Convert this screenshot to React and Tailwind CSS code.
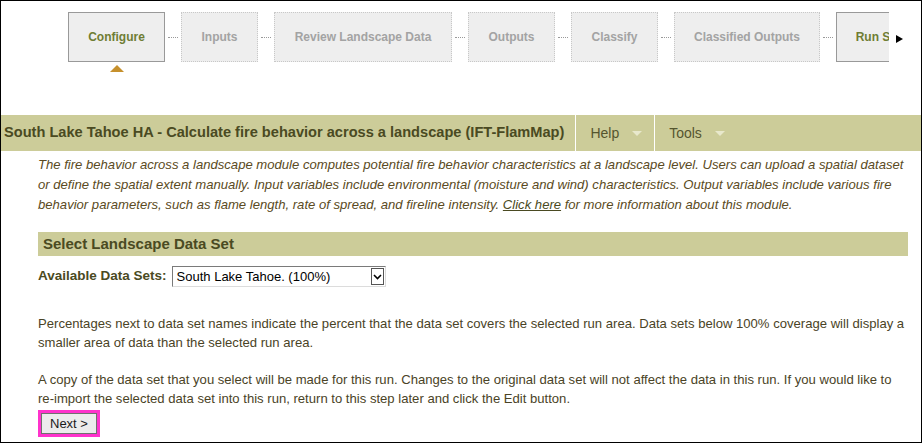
import React from 'react';

// Wizard steps shown across the top strip (widths taken from the layout).
const STEPS = [
  { label: 'Configure', width: 'w-[97px]', active: true },
  { label: 'Inputs', width: 'w-[77px]' },
  { label: 'Review Landscape Data', width: 'w-[178px]' },
  { label: 'Outputs', width: 'w-[87px]' },
  { label: 'Classify', width: 'w-[87px]' },
  { label: 'Classified Outputs', width: 'w-[146px]' },
  { label: 'Run Step', width: 'w-[92px]', current: true },
];

const FONT = "font-['Liberation_Sans',Arial,sans-serif]";

function StepBox({ step }) {
  const solid = step.active || step.current;
  return (
    <div
      className={`relative shrink-0 h-[50px] ${step.width} flex items-center justify-center bg-[#eeeeee] text-[12px] font-bold whitespace-nowrap ${
        solid
          ? 'border border-[#999999] text-[#6f7d34]'
          : 'border border-dotted border-[#c8c8c8] text-[#a3a3a3]'
      }`}
    >
      {step.label}
      {step.active && (
        <span className="absolute left-1/2 top-full mt-[4px] -translate-x-1/2 w-0 h-0 border-x-[7px] border-x-transparent border-b-[7px] border-b-[#c6902c]" />
      )}
    </div>
  );
}

function StepStrip() {
  return (
    <div className="h-[114px] pt-[11px] flex items-start">
      <div className="ml-[67px] w-[821px] h-[70px] overflow-hidden">
        <div className="flex items-center">
          {STEPS.map((step, i) => (
            <React.Fragment key={step.label}>
              {i > 0 && (
                <span className="shrink-0 w-[16px] flex justify-center">
                  <span className="w-[10px] border-t border-dotted border-[#999999]" />
                </span>
              )}
              <StepBox step={step} />
            </React.Fragment>
          ))}
        </div>
      </div>
      {/* scroll-right arrow */}
      <span className="mt-[23px] ml-[7px] w-0 h-0 border-y-[4px] border-y-transparent border-l-[7px] border-l-black" />
    </div>
  );
}

function MenuItem({ label }) {
  return (
    <div className="flex items-center pl-[14px] pr-[12px] text-[14px] text-[#55552f]">
      <span>{label}</span>
      <span className="ml-[13px] mt-[1px] w-0 h-0 border-x-[5px] border-x-transparent border-t-[5px] border-t-[#e8e8cc]" />
    </div>
  );
}

export default function App() {
  return (
    <div className={`w-[923px] h-[444px] bg-white ${FONT}`}>
      <div className="w-[922px] h-[443px] border border-black overflow-hidden">
        <StepStrip />

        {/* module title bar */}
        <div className="h-[36px] bg-[#cccc99] flex items-stretch">
          <div className="flex items-center pl-[3px] pr-[11px] text-[14.6px] font-bold text-[#4a4a22] whitespace-nowrap">
            South Lake Tahoe HA - Calculate fire behavior across a landscape (IFT-FlamMap)
          </div>
          <span className="w-px bg-white" />
          <MenuItem label="Help" />
          <span className="w-px bg-white" />
          <MenuItem label="Tools" />
        </div>

        <div className="pl-[37px] w-[907px]">
          <p className="pt-[4px] text-[13.1px] leading-[20px] italic text-[#5a4a22]">
            The fire behavior across a landscape module computes potential fire behavior characteristics at a landscape level. Users can upload a spatial dataset or define the spatial extent manually. Input variables include environmental (moisture and wind) characteristics. Output variables include various fire behavior parameters, such as flame length, rate of spread, and fireline intensity.{' '}
            <a className="underline text-[#4a4a22]">Click here</a> for more information about this module.
          </p>

          <div className="mt-[17px] h-[24px] bg-[#cccc99] flex items-center pl-[5px] text-[15px] font-bold text-[#4a4a22]">
            Select Landscape Data Set
          </div>

          <div className="mt-[10px] flex items-center">
            <span className="text-[13.5px] font-bold text-[#4a4a22]">Available Data Sets:</span>
            <div className="ml-[5px] w-[214px] h-[21px] flex items-center border border-[#7a7a7a] border-r-[#dcdcdc] border-b-[#dcdcdc] bg-white">
              <span className="flex-1 pl-[4px] text-[13px] text-black">South Lake Tahoe. (100%)</span>
              <span className="w-[13px] h-[17px] mr-px flex items-center justify-center border border-[#555555] bg-white">
                <svg width="9" height="6" viewBox="0 0 9 6">
                  <path d="M1 1 L4.5 4.5 L8 1" fill="none" stroke="black" strokeWidth="1.6" />
                </svg>
              </span>
            </div>
          </div>

          <p className="mt-[27px] text-[13.1px] leading-[19px] text-[#4a4326]">
            Percentages next to data set names indicate the percent that the data set covers the selected run area. Data sets below 100% coverage will display a smaller area of data than the selected run area.
          </p>
          <p className="mt-[18px] text-[13.1px] leading-[19px] text-[#4a4326]">
            A copy of the data set that you select will be made for this run. Changes to the original data set will not affect the data in this run. If you would like to{' '}
            <span className="whitespace-nowrap">re-import</span> the selected data set into this run, return to this step later and click the Edit button.
          </p>

          <div className="mt-[2px] inline-block border-[3px] border-[#ff33cc]">
            <button className="h-[21px] px-[8px] flex items-center bg-[#ececec] border border-[#707070] text-[13px] text-[#1a1a1a]">
              Next &gt;
            </button>
          </div>
        </div>
      </div>
    </div>
  );
}
